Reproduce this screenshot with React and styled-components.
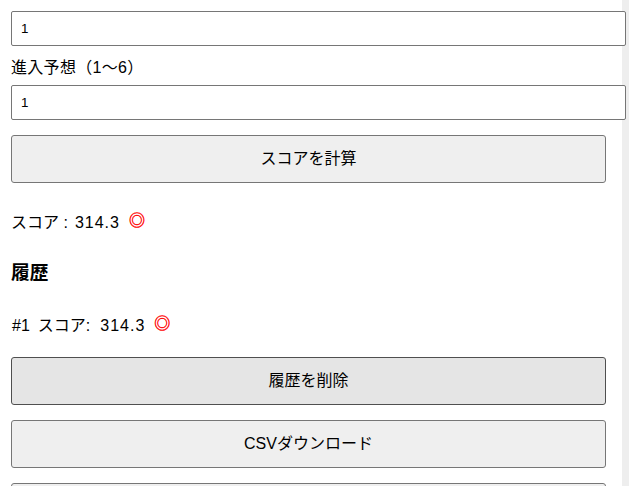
import React from 'react';
import styled, { createGlobalStyle } from 'styled-components';

const GlobalStyle = createGlobalStyle`
  html, body {
    margin: 0;
    height: 486px;
    overflow: hidden;
    background: #fff;
  }
  body {
    font-family: "Liberation Sans", "Noto Sans CJK JP", sans-serif;
    font-size: 16px;
    color: #000;
  }
`;

const Viewport = styled.div`
  position: relative;
  height: 486px;
  overflow: hidden;
`;

// the page is photographed scrolled down, so the top of the form is cut off
const Page = styled.div`
  position: relative;
  z-index: 1;
  margin-top: -18px;
  padding: 0 23px 0 11px;
`;

const Track = styled.div`
  position: absolute;
  top: 0;
  right: 0;
  bottom: 0;
  width: 7px;
  background: #eeeeee;
`;

const Label = styled.label`
  display: block;
  height: 23px;
  line-height: ${(props) => props.$line || 24}px;
  margin-bottom: 6px;
  letter-spacing: 0.3px;
`;

const Input = styled.input`
  display: block;
  box-sizing: border-box;
  width: 615px;
  height: 35px;
  margin-bottom: 10px;
  padding: 0 9px;
  border: 1px solid #767676;
  border-radius: 2px;
  background: #fff;
  font: 13.33px "Liberation Sans", sans-serif;
  color: #000;
`;

const Button = styled.button`
  display: block;
  box-sizing: border-box;
  width: 100%;
  height: 48px;
  margin-top: ${(props) => props.$top || 0}px;
  margin-bottom: ${(props) => props.$gap}px;
  padding: 0 0 5px;
  border: 1px solid ${(props) => (props.$hover ? '#4f4f4f' : '#767676')};
  border-radius: 3px;
  background: ${(props) => (props.$hover ? '#e5e5e5' : '#efefef')};
  font: inherit;
  color: #000;
`;

const ScoreLine = styled.p`
  margin: 0;
  height: 24px;
  line-height: 24px;
  display: flex;
  align-items: center;
`;

const Tag = styled.span`
  margin-left: ${(props) => props.$left || 0}px;
`;

const Value = styled.span`
  margin-left: ${(props) => props.$left}px;
  letter-spacing: 1px;
`;

const Mark = styled.span`
  margin-left: 9px;
  color: #ff0000;
  -webkit-text-stroke: 0.4px #ff0000;
  position: relative;
  top: -2px;
`;

const Heading = styled.h3`
  margin: 26px 0 29px;
  height: 24px;
  line-height: 24px;
  font-size: 18.72px;
  font-weight: 700;
`;

const App = () => {
  return (
    <Viewport>
      <GlobalStyle />
      <Track />
      <Page>
        <Label $line={18}>展示順位</Label>
        <Input defaultValue="1" />
        <Label>進入予想（1〜6）</Label>
        <Input defaultValue="1" />
        <Button $top={15} $gap={28}>スコアを計算</Button>
        <ScoreLine>
          <Tag>スコア :</Tag>
          <Value $left={7}>314.3</Value>
          <Mark>◎</Mark>
        </ScoreLine>
        <Heading>履歴</Heading>
        <ScoreLine>
          <Tag $left={1}>#1</Tag>
          <Tag $left={8}>スコア:</Tag>
          <Value $left={10}>314.3</Value>
          <Mark>◎</Mark>
        </ScoreLine>
        <Button $top={19} $gap={15} $hover>履歴を削除</Button>
        <Button $gap={15}>CSVダウンロード</Button>
        <Button $gap={15}>戻る</Button>
      </Page>
    </Viewport>
  );
};

export default App;
